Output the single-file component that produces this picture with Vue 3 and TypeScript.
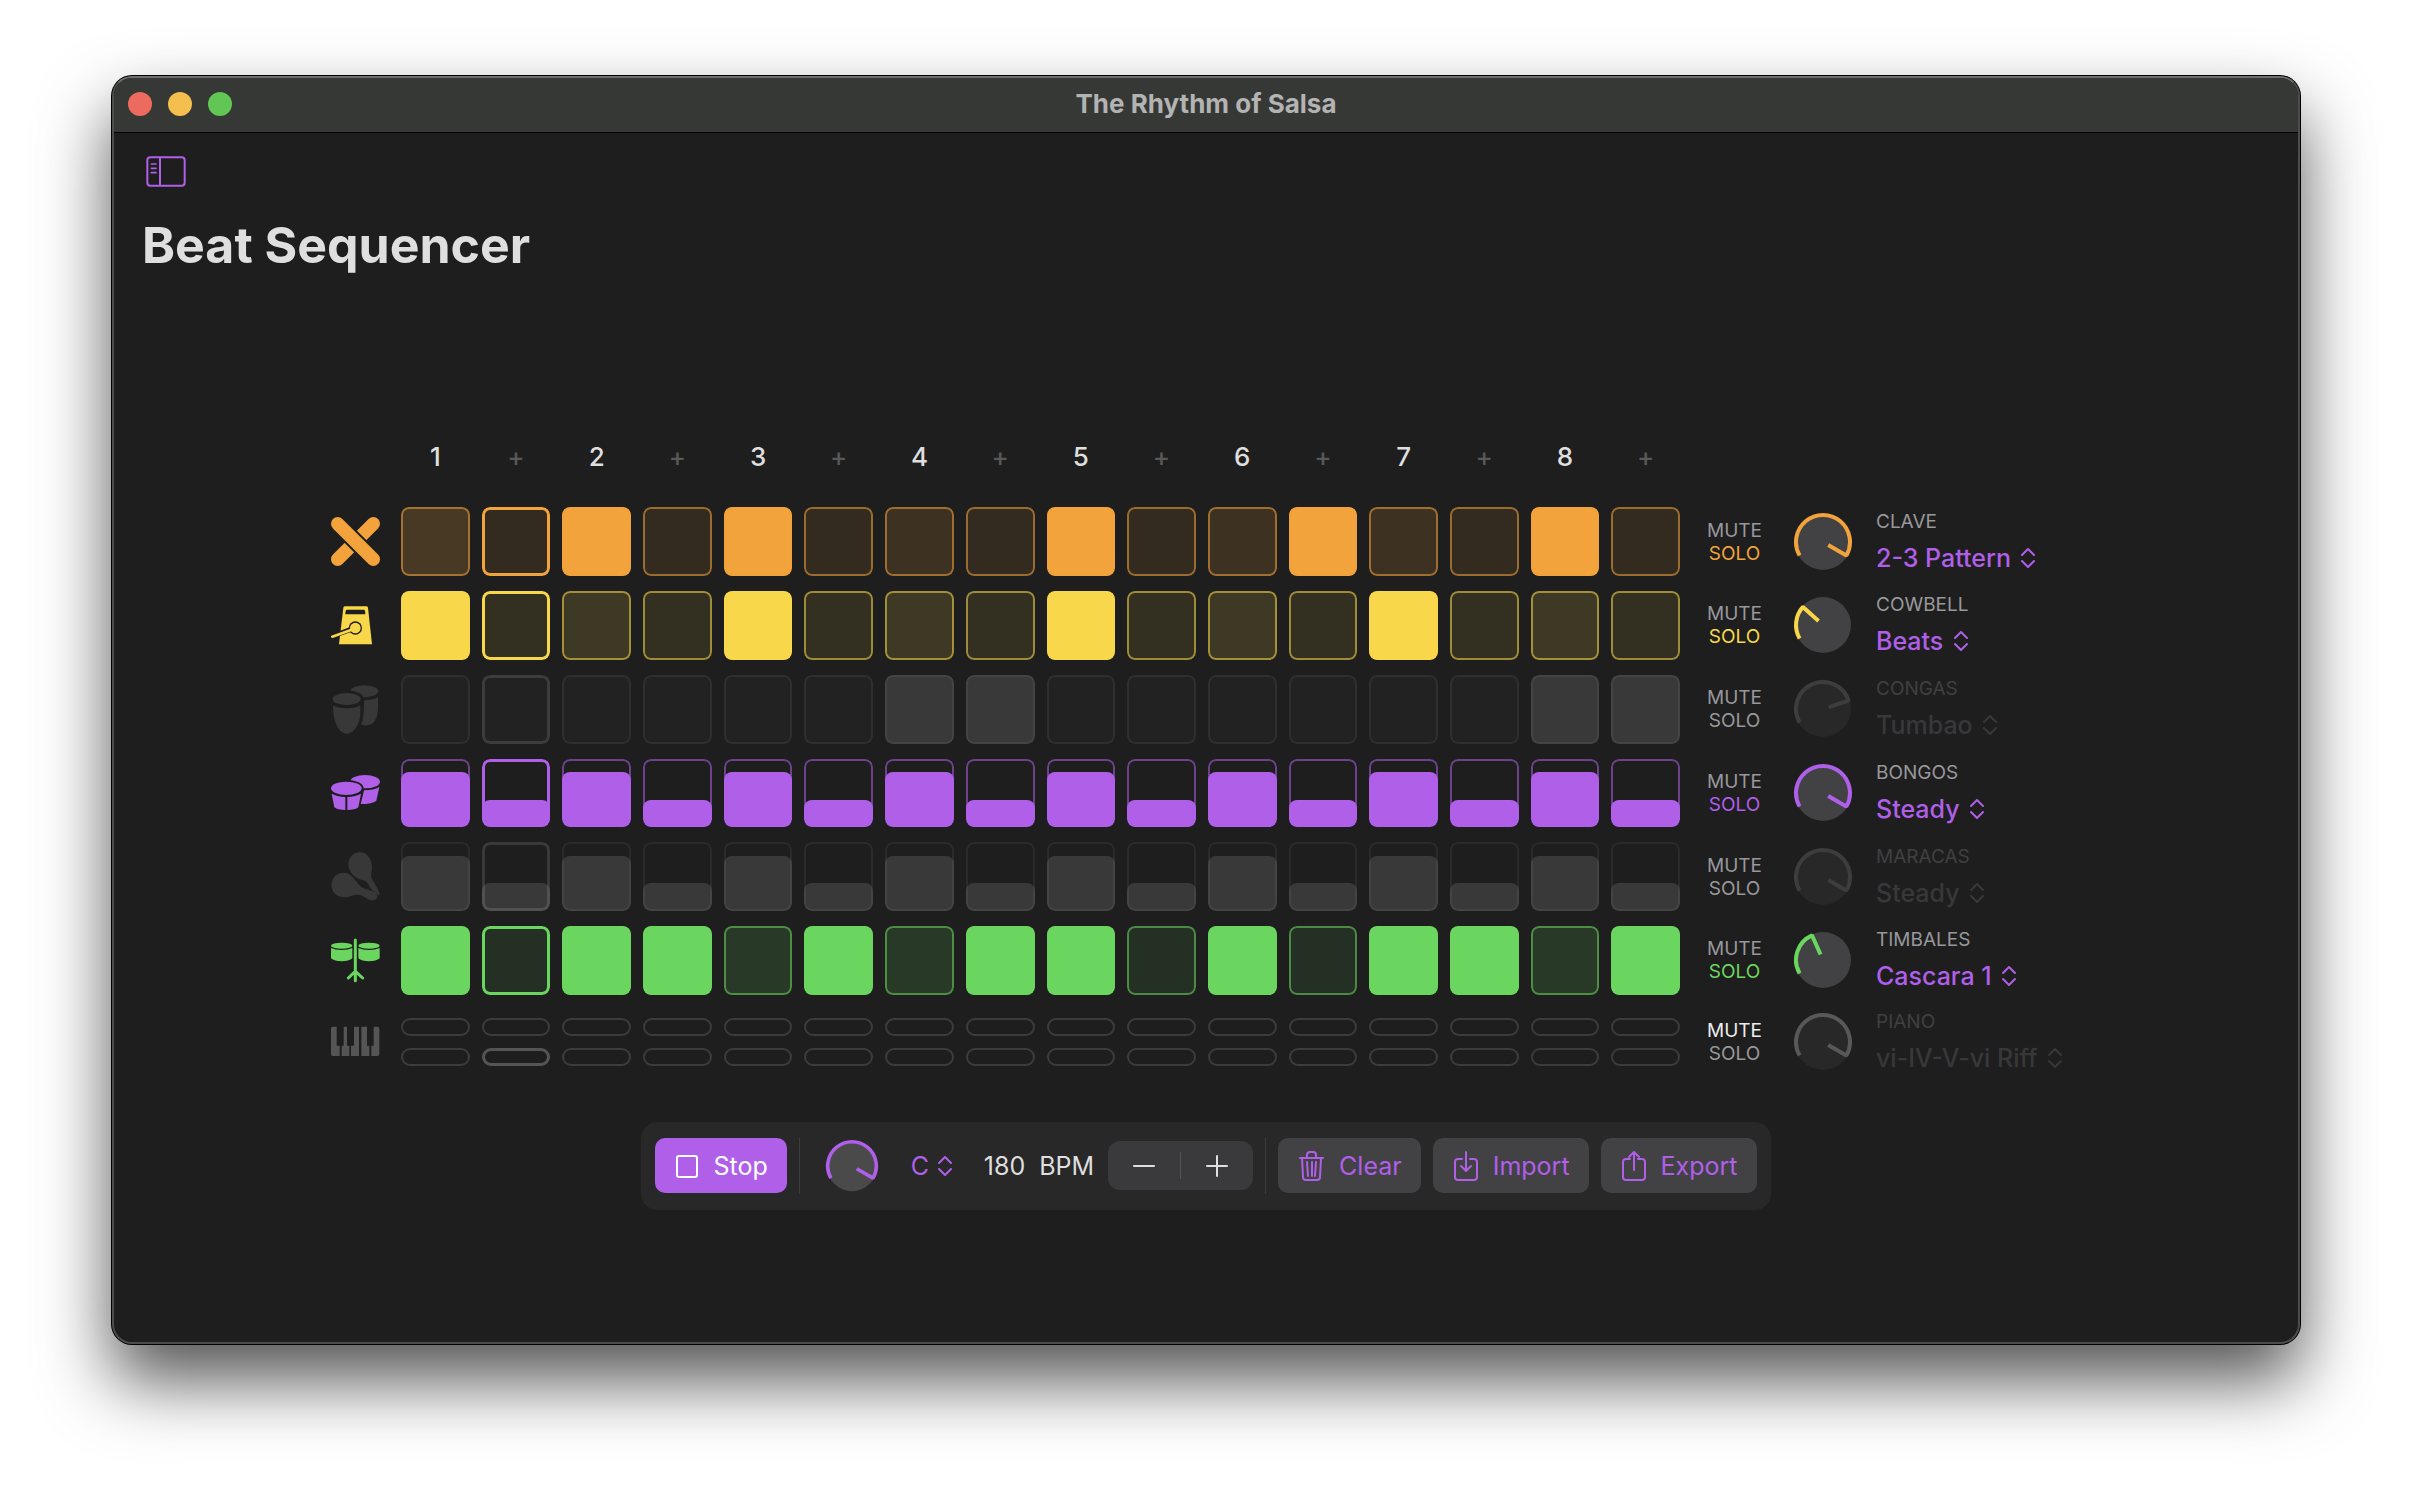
<script setup lang="ts">
import { computed, reactive, ref } from 'vue'

interface Track {
  id: string
  name: string
  pattern: string
  tint: string
  muted: boolean
  solo: boolean
  volume: number
  kind: 'pads' | 'bars' | 'keys'
  steps: number[]
}

const PLAYHEAD = 1
const ARC_START = 150
const ARC_SWEEP = 240

const parse = (pattern: string): number[] => pattern.split('').map((c) => Number(c) / 10)
const pads = (pattern: string): number[] => pattern.split('').map((c) => (c === 'x' ? 1 : 0))

const tracks = reactive<Track[]>([
  { id: 'clave', name: 'Clave', pattern: '2-3 Pattern', tint: '#f2a33c', muted: false, solo: true, volume: 100, kind: 'pads', steps: pads('..x.x...x..x..x.') },
  { id: 'cowbell', name: 'Cowbell', pattern: 'Beats', tint: '#f8d84a', muted: false, solo: true, volume: 30, kind: 'pads', steps: pads('x...x...x...x...') },
  { id: 'congas', name: 'Congas', pattern: 'Tumbao', tint: '#ffffff', muted: false, solo: false, volume: 80, kind: 'pads', steps: pads('......xx......xx') },
  { id: 'bongos', name: 'Bongos', pattern: 'Steady', tint: '#b05fe9', muted: false, solo: true, volume: 100, kind: 'bars', steps: parse('8484848484848484') },
  { id: 'maracas', name: 'Maracas', pattern: 'Steady', tint: '#ffffff', muted: false, solo: false, volume: 100, kind: 'bars', steps: parse('8484848484848484') },
  { id: 'timbales', name: 'Timbales', pattern: 'Cascara 1', tint: '#6bd65f', muted: false, solo: true, volume: 40, kind: 'pads', steps: pads('x.xx.x.xx.x.xx.x') },
  { id: 'piano', name: 'Piano', pattern: 'vi-IV-V-vi Riff', tint: '#ffffff', muted: true, solo: false, volume: 100, kind: 'keys', steps: parse('0000000000000000') },
])

const counts = Array.from({ length: 16 }, (_, i) => (i % 2 === 0 ? String(i / 2 + 1) : '+'))
const playing = ref(true)
const tempo = ref(180)
const master = ref(100)
const anySolo = computed(() => tracks.some((t) => t.solo))

function audible(t: Track): boolean {
  return !t.muted && (!anySolo.value || t.solo)
}

function toggle(t: Track, i: number): void {
  const full = t.kind === 'bars' ? 0.8 : 1
  t.steps[i] = t.steps[i] > 0 ? 0 : full
}

function shade(t: Track, i: number): string {
  if (t.kind === 'bars') return 'plain'
  if (i === 0 && t.id === 'clave') return 'strong'
  return i % 2 === 0 ? 'beat' : 'off'
}

function point(degrees: number, radius: number): string {
  const a = (degrees * Math.PI) / 180
  return `${(30 + radius * Math.cos(a)).toFixed(2)} ${(30 + radius * Math.sin(a)).toFixed(2)}`
}

function arc(value: number): string {
  const sweep = (ARC_SWEEP * value) / 100
  const end = ARC_START + sweep
  return `M${point(ARC_START, 27)} A27 27 0 ${sweep > 180 ? 1 : 0} 1 ${point(end, 27)} L${point(end, 6)}`
}
</script>

<template>
  <div class="desktop">
    <div class="window">
      <header class="titlebar">
        <div class="lights">
          <button type="button" class="light close" aria-label="Close"></button>
          <button type="button" class="light minimise" aria-label="Minimise"></button>
          <button type="button" class="light zoom" aria-label="Zoom"></button>
        </div>
        <div class="title">The Rhythm of Salsa</div>
      </header>

      <div class="heading">
        <button type="button" class="sidebar-toggle" aria-label="Toggle sidebar">
          <svg viewBox="0 0 120 93" width="40" height="31" fill="none" stroke="currentColor">
            <rect x="4" y="4" width="112" height="85" rx="9" stroke-width="6" />
            <path d="M42 4V89" stroke-width="6" />
            <path d="M16 24H30M16 37H30M16 50H30" stroke-width="5" stroke-linecap="round" />
          </svg>
        </button>
        <h1>Beat Sequencer</h1>
      </div>

      <main class="stage">
        <section class="board" aria-label="Tracks">
          <div class="row counts">
            <div class="steps">
              <span v-for="(c, i) in counts" :key="i" :class="c === '+' ? 'and' : 'count'">{{ c }}</span>
            </div>
          </div>

          <div
            v-for="t in tracks"
            :key="t.id"
            class="row"
            :class="[t.kind, { quiet: !audible(t), muted: t.muted }]"
            :style="{ '--tint': t.tint }"
          >
            <svg class="icon" viewBox="0 0 147 147" width="49" height="49" fill="currentColor" aria-hidden="true">
              <g v-if="t.id === 'clave'" fill="none" stroke-linecap="round">
                <path d="M127 20L20 127" stroke="currentColor" stroke-width="40" />
                <path d="M20 20L127 127" stroke="#1e1e1e" stroke-width="52" stroke-linecap="butt" />
                <path d="M20 20L127 127" stroke="currentColor" stroke-width="40" />
              </g>
              <g v-else-if="t.id === 'cowbell'">
                <path d="M42 16H106Q110 16 111 20L123 130H24L37 20Q38 16 42 16Z" />
                <path d="M48 26H99Q103 26 103 40H43Q43 26 48 26Z" fill="#1e1e1e" />
                <path d="M22 99L60 85" stroke="#1e1e1e" stroke-width="15" />
                <circle cx="73" cy="81" r="20" fill="#1e1e1e" />
                <circle cx="73" cy="81" r="16" />
                <path d="M4 107L62 86" stroke="currentColor" stroke-width="8" stroke-linecap="round" />
              </g>
              <g v-else-if="t.id === 'congas'">
                <ellipse cx="100" cy="19" rx="42" ry="18" />
                <ellipse cx="47" cy="42" rx="51" ry="26" fill="#1e1e1e" />
                <ellipse cx="47" cy="42" rx="42" ry="18" />
                <path d="M6 61Q18 70 47 70Q76 70 88 61V86C88 116 68 146 47 146C26 146 6 116 6 61Z" />
                <path d="M99 46Q126 46 141 36V68C141 96 130 114 120 118Q108 124 90 119Q97 104 98 84Z" />
              </g>
              <g v-else-if="t.id === 'bongos'">
                <ellipse cx="102" cy="41" rx="45" ry="20" />
                <ellipse cx="46" cy="61" rx="52" ry="26" fill="#1e1e1e" />
                <ellipse cx="46" cy="61" rx="46" ry="20" />
                <path d="M2 77Q18 86 43 87V126Q20 126 10 118Z" />
                <path d="M90 77Q74 86 49 87V126Q72 126 82 118Z" />
                <path d="M99 67Q128 67 145 57L136 98Q124 108 89 108L95 84Z" />
              </g>
              <g v-else-if="t.id === 'maracas'">
                <path d="M87 1C109 1 124 24 123 48C122 60 119 66 121 77L143 116Q147 126 144 131L133 122Q122 116 116 104C109 90 104 85 92 84C70 78 52 58 52 37C53 14 70 1 87 1Z" />
                <path d="M37 62C53 62 63 71 75 87C88 105 98 110 108 112L132 121Q142 129 138 139Q131 148 116 144L93 131C78 125 68 129 60 132C46 138 18 139 6 118C-7 90 10 62 37 62Z" />
              </g>
              <g v-else-if="t.id === 'timbales'">
                <ellipse cx="32" cy="29" rx="32" ry="9" />
                <path d="M0 36Q12 42 32 42Q52 42 64 36V67Q54 76 32 76Q10 76 0 67Z" />
                <ellipse cx="114" cy="29" rx="32" ry="9" />
                <path d="M82 36Q94 42 114 42Q134 42 146 36V67Q136 76 114 76Q92 76 82 67Z" />
                <path d="M73 12V134M52 126L73 106L95 126" fill="none" stroke="currentColor" stroke-width="9" stroke-linecap="round" />
              </g>
              <g v-else>
                <path d="M6 29H17V86H26V117H6Q0 117 0 111V35Q0 29 6 29Z" />
                <path d="M38 29H48V86H55V117H32V86H38Z" />
                <path d="M69 29H84V117H60V86H69Z" />
                <path d="M91 29H108V86H115V117H91Z" />
                <path d="M128 29H139Q145 29 145 35V111Q145 117 139 117H121V86H128Z" />
              </g>
            </svg>

            <div class="steps">
              <template v-for="(level, i) in t.steps" :key="i">
                <div v-if="t.kind === 'keys'" class="pair">
                  <button type="button" class="pill" :aria-label="`${t.name} upper ${i + 1}`"></button>
                  <button type="button" class="pill" :class="{ now: i === PLAYHEAD }" :aria-label="`${t.name} lower ${i + 1}`"></button>
                </div>
                <button
                  v-else
                  type="button"
                  class="cell"
                  :class="[shade(t, i), { now: i === PLAYHEAD }]"
                  :aria-label="`${t.name} ${i + 1}`"
                  :aria-pressed="level > 0"
                  @click="toggle(t, i)"
                >
                  <span class="fill" :style="{ height: `${level * 100}%` }"></span>
                  <span class="ring"></span>
                </button>
              </template>
            </div>

            <div class="switches">
              <button type="button" class="mute" :aria-pressed="t.muted" @click="t.muted = !t.muted">MUTE</button>
              <button type="button" class="solo" :aria-pressed="t.solo" @click="t.solo = !t.solo">SOLO</button>
            </div>

            <label class="knob">
              <svg viewBox="0 0 60 60" width="60" height="60" aria-hidden="true">
                <circle class="dial" cx="30" cy="30" r="28" />
                <path class="arc" :d="arc(t.volume)" />
              </svg>
              <input v-model.number="t.volume" type="range" min="0" max="100" :aria-label="`${t.name} volume`" />
            </label>

            <div class="voice">
              <label :for="`pattern-${t.id}`">{{ t.name.toUpperCase() }}</label>
              <span class="menu">
                <select :id="`pattern-${t.id}`" :disabled="!audible(t)">
                  <option>{{ t.pattern }}</option>
                </select>
                <svg class="chevrons" viewBox="0 0 16 22" width="16" height="22" aria-hidden="true">
                  <path d="M2 8L8 2L14 8M2 14L8 20L14 14" />
                </svg>
              </span>
            </div>
          </div>
        </section>

        <section class="transport" aria-label="Transport">
          <button type="button" class="btn primary" @click="playing = !playing">
            <svg viewBox="0 0 22 24" width="22" height="24" fill="none" stroke="currentColor" stroke-width="2" aria-hidden="true">
              <rect x="1" y="2" width="20" height="21" rx="2" />
            </svg>
            Stop
          </button>
          <span class="rule"></span>
          <label class="knob master">
            <svg viewBox="0 0 60 60" width="54" height="54" aria-hidden="true">
              <circle class="dial" cx="30" cy="30" r="28" />
              <path class="arc" :d="arc(master)" />
            </svg>
            <input v-model.number="master" type="range" min="0" max="100" aria-label="Master volume" />
          </label>
          <span class="menu key">
            <select aria-label="Key">
              <option>C</option>
            </select>
            <svg class="chevrons" viewBox="0 0 16 22" width="16" height="22" aria-hidden="true">
              <path d="M2 8L8 2L14 8M2 14L8 20L14 14" />
            </svg>
          </span>
          <div class="tempo">
            <output>{{ tempo }}</output>
            <span>BPM</span>
            <div class="stepper">
              <button type="button" aria-label="Slower" @click="tempo--">
                <svg viewBox="0 0 22 22" width="22" height="22" aria-hidden="true"><path d="M1 11H21" /></svg>
              </button>
              <span class="split"></span>
              <button type="button" aria-label="Faster" @click="tempo++">
                <svg viewBox="0 0 22 22" width="22" height="22" aria-hidden="true"><path d="M1 11H21M11 1V21" /></svg>
              </button>
            </div>
          </div>
          <span class="rule"></span>
          <button type="button" class="btn">
            <svg viewBox="0 0 25 30" width="25" height="30" fill="none" stroke="currentColor" stroke-width="2" stroke-linecap="round" stroke-linejoin="round" aria-hidden="true">
              <path d="M1 7H24M8 7V4Q8 1 11 1H14Q17 1 17 4V7M3 7L4 26Q4 29 7 29H18Q21 29 21 26L22 7" />
              <path d="M8 11L9 25M13 11V25M17 11L16 25" />
            </svg>
            Clear
          </button>
          <button type="button" class="btn">
            <svg viewBox="0 0 24 30" width="24" height="30" fill="none" stroke="currentColor" stroke-width="2" stroke-linecap="round" stroke-linejoin="round" aria-hidden="true">
              <path d="M8 8H4Q1 8 1 11V26Q1 29 4 29H20Q23 29 23 26V11Q23 8 20 8H16" />
              <path d="M12 1V20M7 15L12 20L17 15" />
            </svg>
            Import
          </button>
          <button type="button" class="btn">
            <svg viewBox="0 0 24 30" width="24" height="30" fill="none" stroke="currentColor" stroke-width="2" stroke-linecap="round" stroke-linejoin="round" aria-hidden="true">
              <path d="M8 8H4Q1 8 1 11V26Q1 29 4 29H20Q23 29 23 26V11Q23 8 20 8H16" />
              <path d="M12 19V1M7 6L12 1L17 6" />
            </svg>
            Export
          </button>
        </section>
      </main>
    </div>
  </div>
</template>

<style>
body {
  background: #ffffff;
}
</style>

<style scoped>
* {
  box-sizing: border-box;
}

button,
select {
  appearance: none;
  margin: 0;
  padding: 0;
  border: 0;
  background: none;
  color: inherit;
  font: inherit;
}

svg {
  display: block;
  flex: none;
}

.desktop {
  --accent: #b05fe9;
  display: flex;
  min-height: 100vh;
  padding: 76px 112px 148px;
  overflow: hidden;
  font-family: Inter, 'Liberation Sans', sans-serif;
  font-size: 26px;
  line-height: 32px;
  color: #dfdfdf;
}

.window {
  flex: 1;
  display: flex;
  flex-direction: column;
  border: 2px solid #4c4c4c;
  border-top-color: #6d6f6d;
  border-radius: 20px;
  background: #1e1e1e;
  box-shadow: 0 0 0 1px #000000, 0 36px 70px rgba(0, 0, 0, 0.68);
}

.titlebar {
  display: grid;
  grid-template-columns: 1fr auto 1fr;
  align-items: center;
  height: 55px;
  padding: 0 14px 2px;
  border-bottom: 1px solid #000000;
  border-radius: 18px 18px 0 0;
  background: #363836;
}

.lights {
  display: flex;
  gap: 16px;
}

.light {
  width: 24px;
  height: 24px;
  border-radius: 50%;
}

.close {
  background: #ed6a5f;
}

.minimise {
  background: #f5bf4f;
}

.zoom {
  background: #62c654;
}

.title {
  font-weight: 700;
  color: #b2b3b2;
}

.heading {
  padding: 23px 28px 0;
}

.sidebar-toggle {
  display: block;
  padding: 0 4px;
  color: var(--accent);
}

h1 {
  margin: 26px 0 0;
  font-size: 50px;
  line-height: 64px;
  font-weight: 700;
}

.stage {
  flex: 1;
  display: flex;
  flex-direction: column;
  align-items: center;
  justify-content: center;
  gap: 48px;
  padding: 32px 24px 0;
}

.board {
  display: flex;
  flex-direction: column;
  gap: 15px;
  width: 100%;
  max-width: 1750px;
}

.row {
  display: grid;
  grid-template-columns: 70px 1fr 109px 68px 224px;
  align-items: center;
  color: var(--tint);
}

.row.counts {
  padding-bottom: 19px;
  font-weight: 500;
  color: #dfdfdf;
}

.counts .steps {
  grid-column: 2;
  text-align: center;
}

.and {
  color: #585858;
}

.steps {
  display: grid;
  grid-template-columns: repeat(16, 1fr);
  gap: 12px;
}

.quiet .icon {
  color: #383838;
}

.muted .icon {
  color: #555555;
}

.cell {
  display: grid;
  aspect-ratio: 1;
  border-radius: 8px;
  overflow: hidden;
}

.cell.strong {
  background: color-mix(in srgb, var(--tint) 20%, transparent);
}

.cell.beat {
  background: color-mix(in srgb, var(--tint) 15%, transparent);
}

.cell.off {
  background: color-mix(in srgb, var(--tint) 10%, transparent);
}

.fill,
.ring {
  grid-area: 1 / 1;
  border-radius: 8px;
}

.fill {
  align-self: end;
  background: var(--tint);
}

.ring {
  border: 2px solid color-mix(in srgb, var(--tint) 55%, transparent);
}

.now .ring {
  border: 3px solid var(--tint);
}

.quiet .cell.beat,
.quiet .cell.off {
  background: #222222;
}

.quiet .fill {
  background: #393939;
}

.quiet .ring {
  border-color: rgba(255, 255, 255, 0.06);
}

.quiet .now .ring {
  border-color: rgba(255, 255, 255, 0.12);
}

.pair {
  display: grid;
  gap: 12px;
}

.pill {
  height: 18px;
  border: 2px solid #3c3c3c;
  border-radius: 9px;
}

.pill.now {
  border: 3px solid #555555;
}

.switches {
  display: flex;
  flex-direction: column;
  align-items: center;
  font-size: 19px;
  line-height: 23px;
  color: #98989c;
}

.mute[aria-pressed='true'] {
  color: #ececec;
}

.solo[aria-pressed='true'] {
  color: var(--tint);
}

.knob {
  position: relative;
  justify-self: center;
  color: var(--tint);
}

.knob input {
  position: absolute;
  inset: 0;
  width: 100%;
  height: 100%;
  margin: 0;
  opacity: 0;
}

.dial {
  fill: #424244;
}

.arc {
  fill: none;
  stroke: currentColor;
  stroke-width: 4;
  stroke-linejoin: bevel;
}

.quiet .dial {
  fill: #282828;
}

.quiet .knob {
  color: #3d3d3d;
}

.muted .knob {
  color: #585858;
}

.voice {
  display: flex;
  flex-direction: column;
  gap: 8px;
  padding-left: 19px;
  font-size: 19px;
  line-height: 24px;
  color: #98989c;
}

.quiet .voice {
  color: #404041;
}

.menu {
  display: flex;
  align-items: center;
  gap: 9px;
  font-size: 25px;
  line-height: 32px;
  font-weight: 500;
  color: var(--accent);
}

.menu select {
  height: 32px;
  opacity: 1;
}

.quiet .menu {
  color: #38383a;
}

.chevrons {
  fill: none;
  stroke: currentColor;
  stroke-width: 2;
  stroke-linecap: round;
  stroke-linejoin: round;
}

.transport {
  display: flex;
  align-items: center;
  gap: 12px;
  padding: 16px 14px;
  border-radius: 16px;
  background: #282828;
  font-size: 25px;
}

.btn {
  display: flex;
  align-items: center;
  gap: 15px;
  height: 55px;
  padding: 0 19px 0 21px;
  border-radius: 10px;
  background: #424244;
  color: var(--accent);
}

.btn.primary {
  background: var(--accent);
  color: #ffffff;
}

.rule {
  width: 1px;
  height: 56px;
  background: #3c3c3c;
}

.master {
  margin: 0 20px 0 13px;
  color: var(--accent);
}

.master .dial {
  fill: #4a4a4a;
}

.key {
  gap: 7px;
  margin-right: 19px;
  font-weight: 400;
}

.tempo {
  display: flex;
  align-items: center;
  gap: 14px;
}

.stepper {
  display: flex;
  align-items: center;
  height: 49px;
  border-radius: 12px;
  background: #3a3a3c;
}

.stepper button {
  padding: 0 25px;
}

.stepper path {
  fill: none;
  stroke: currentColor;
  stroke-width: 2;
  stroke-linecap: round;
}

.split {
  width: 1px;
  height: 27px;
  background: #535355;
}
</style>
